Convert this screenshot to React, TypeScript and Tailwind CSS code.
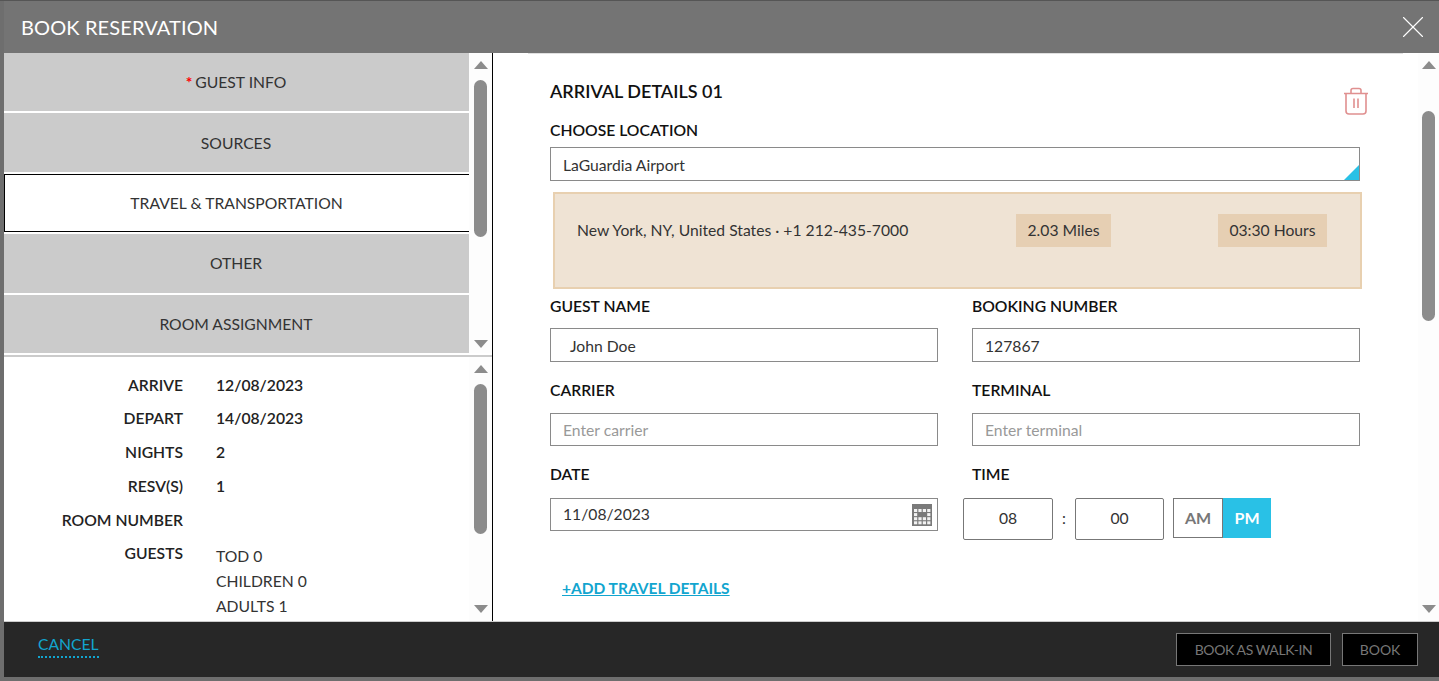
import { X } from 'lucide-react';

const navItems = ['GUEST INFO', 'SOURCES', 'TRAVEL & TRANSPORTATION', 'OTHER', 'ROOM ASSIGNMENT'];

// 커스텀 스크롤바 (thumb 위치는 margin으로 지정)
function ScrollBar({ thumbClass, className }: { thumbClass: string; className: string }) {
  return (
    <div className={`flex flex-col items-center bg-[#fdfdfd] ${className}`}>
      <svg width="14" height="8" viewBox="0 0 14 8" className="shrink-0"><path d="M7 0L14 8H0Z" fill="#8c8c8c" /></svg>
      <div className={`w-[13px] rounded-full bg-[#8c8c8c] ${thumbClass}`} />
      <svg width="14" height="8" viewBox="0 0 14 8" className="mt-auto shrink-0"><path d="M0 0H14L7 8Z" fill="#8c8c8c" /></svg>
    </div>
  );
}

function Summary({ label, value }: { label: string; value?: string }) {
  return (
    <div className="flex h-[33.8px] items-center text-[15.7px]">
      <div className="w-[179px] text-right font-semibold text-[#222]">{label}</div>
      <div className="ml-[33px] font-semibold text-[#222]">{value}</div>
    </div>
  );
}

function Field({ label, value, placeholder, boxClass }: { label: string; value?: string; placeholder?: string; boxClass: string }) {
  return (
    <div className="w-[388px]">
      <div className="h-[22px] text-[15.7px] font-semibold leading-[22px] text-[#111]">{label}</div>
      <div className={`flex items-center border border-[#8a8a8a] bg-white text-[15.7px] ${value ? 'text-[#333]' : 'text-[#999]'} ${boxClass}`}>
        {value ?? placeholder}
      </div>
    </div>
  );
}

export default function App() {
  return (
    <div className="flex h-[681px] w-[1439px] flex-col overflow-hidden border-t border-[#555] bg-[#6e6e6e] pb-[4px] pl-[4px] font-['Lato',sans-serif] text-[#333]">
      <header className="flex h-[52px] shrink-0 items-center justify-between bg-[#747474] pl-[17px] pr-[7px] text-white">
        <h1 className="text-[20px] tracking-[0.12px]">BOOK RESERVATION</h1>
        <X size={38} strokeWidth={0.7} />
      </header>

      <div className="flex h-[568px] shrink-0 bg-white">
        <div className="flex w-[489px] shrink-0 flex-col border-r border-black">
          <div className="flex h-[302px] shrink-0">
            <nav className="flex w-[465px] flex-col gap-[2px] pr-px text-[15.7px]">
              {navItems.map((item, i) => (
                <div
                  key={item}
                  className={`-mr-px flex h-[58.4px] items-center justify-center pr-px pt-[1.5px] ${i === 2 ? 'border border-r-0 border-black bg-white' : 'bg-[#cbcbcb]'}`}
                >
                  {i === 0 && <span className="mr-[3px] font-bold text-[#f00]">*</span>}
                  {item}
                </div>
              ))}
            </nav>
            <ScrollBar className="h-[300px] w-[23px] pt-[8px] pb-[5px]" thumbClass="mt-[11px] h-[157px]" />
          </div>

          <div className="flex min-h-0 flex-1 border-t-2 border-[#cbcbcb]">
            <div className="w-[465px] pt-[11.4px]">
              <Summary label="ARRIVE" value="12/08/2023" />
              <Summary label="DEPART" value="14/08/2023" />
              <Summary label="NIGHTS" value="2" />
              <Summary label="RESV(S)" value="1" />
              <Summary label="ROOM NUMBER" />
              <div className="flex text-[15.7px]">
                <div className="w-[179px] pt-[4.6px] text-right font-semibold text-[#222]">GUESTS</div>
                <div className="ml-[33px] pt-[6.6px] leading-[25px]">
                  <div>TOD 0</div>
                  <div>CHILDREN 0</div>
                  <div>ADULTS 1</div>
                </div>
              </div>
            </div>
            <ScrollBar className="w-[23px] pt-[8px] pb-[8px]" thumbClass="mt-[11px] h-[150px]" />
          </div>
        </div>

        <main className="relative flex min-w-0 flex-1">
          <div className="min-w-0 flex-1 pl-[57px] pr-[58px] pt-[27px]">
            <div className="flex h-[24px] items-center pb-[2px] text-[18px] font-semibold text-[#111]">ARRIVAL DETAILS 01</div>
            <div className="mt-[15px] h-[22px] text-[15.7px] font-semibold leading-[22px] text-[#111]">CHOOSE LOCATION</div>
            <div className="relative mt-[6px] flex h-[34px] items-center border border-[#8a8a8a] pl-3 pt-[3px] text-[15.7px]">
              LaGuardia Airport
              <div className="absolute bottom-0 right-0 h-0 w-0 border-b-[15px] border-l-[15px] border-b-[#29c1e6] border-l-transparent" />
            </div>
            <div className="ml-[3px] mr-[-2px] mt-[11px] flex h-[97px] items-start border-2 border-[#e8d0b0] bg-[#efe3d4] pl-[22px] pt-[20px] text-[15.7px]">
              <div className="flex h-[33px] w-[439px] items-center">New York, NY, United States · +1 212-435-7000</div>
              <div className="flex h-[33px] w-[95px] items-center justify-center bg-[#e6cfb3]">2.03 Miles</div>
              <div className="ml-[107px] flex h-[33px] w-[109px] items-center justify-center bg-[#e6cfb3]">03:30 Hours</div>
            </div>

            <div className="mt-[6px] flex gap-[34px]">
              <Field label="GUEST NAME" value="John Doe" boxClass="mt-[11px] h-[34px] pl-[19px] pt-[3px]" />
              <Field label="BOOKING NUMBER" value="127867" boxClass="mt-[11px] h-[34px] pl-3 pt-[3px]" />
            </div>
            <div className="mt-[17px] flex gap-[34px]">
              <Field label="CARRIER" placeholder="Enter carrier" boxClass="mt-[12px] h-[33px] pl-3 pt-[2px]" />
              <Field label="TERMINAL" placeholder="Enter terminal" boxClass="mt-[12px] h-[33px] pl-3 pt-[2px]" />
            </div>

            <div className="mt-[17px] flex">
              <div className="w-[388px]">
                <div className="h-[22px] text-[15.7px] font-semibold leading-[22px] text-[#111]">DATE</div>
                <div className="mt-[13px] flex h-[33px] items-center justify-between border border-[#8a8a8a] pl-3 pr-[5px] text-[15.7px]">
                  11/08/2023
                  <svg width="20" height="22" viewBox="0 0 20 22">
                    <rect width="20" height="22" fill="#7a7a7a" />
                    {[0, 1, 2, 3].map((c) =>
                      [0, 1, 2, 3].map((r) => (
                        <rect key={`${c}-${r}`} x={2 + c * 4.4} y={5 + r * 4.1} width="3.2" height="3" fill={(c === 1 || c === 2) && r === 1 ? '#7a7a7a' : '#f2f2f2'} />
                      )),
                    )}
                  </svg>
                </div>
              </div>
              <div className="ml-[25px]">
                <div className="h-[22px] pl-[9px] text-[15.7px] font-semibold leading-[22px] text-[#111]">TIME</div>
                <div className="mt-[13px] flex items-start text-[15.7px]">
                  <div className="flex h-[42px] w-[90px] items-center justify-center rounded-[2px] border border-[#777]">08</div>
                  <div className="flex h-[42px] w-[22px] items-center justify-center">:</div>
                  <div className="flex h-[42px] w-[89px] items-center justify-center rounded-[2px] border border-[#777]">00</div>
                  <div className="ml-[9px] flex h-[40px] w-[50px] items-center justify-center border border-[#777] text-[16px] font-bold text-[#777]">AM</div>
                  <div className="flex h-[40px] w-[48px] items-center justify-center bg-[#29c1e6] text-[16px] font-bold text-white">PM</div>
                </div>
              </div>
            </div>

            <a className="ml-[12px] mt-[37px] block text-[15.5px] font-bold leading-[22px] text-[#12a5cf] underline">+ADD TRAVEL DETAILS</a>
          </div>
          <ScrollBar className="w-[21px] pt-[8px] pb-[8px]" thumbClass="mt-[42px] h-[210px]" />
          <div className="absolute left-[35px] right-[36px] top-0 h-px bg-[#e0e0e0]" />
          <svg className="absolute left-[850px] top-[34px]" width="26" height="28" viewBox="0 0 26 28" fill="none" stroke="#e09090" strokeWidth="1.6">
            <path d="M1 6.5H25M8 6V3.5C8 2 9 1.5 10 1.5H16C17 1.5 18 2 18 3.5V6M3 6.5V24C3 26 4 27 6 27H20C22 27 23 26 23 24V6.5M11 11.5V21M15 11.5V21" />
          </svg>
        </main>
      </div>

      <footer className="flex min-h-0 flex-1 items-start justify-between border-t border-[#ccc] bg-[#272727] pl-[34px] pr-[21px]">
        <a className="mt-[12px] border-b-2 border-dotted border-[#12a5cf] pb-[2px] text-[15.7px] leading-[20px] text-[#12a5cf]">CANCEL</a>
        <div className="mt-[11px] flex gap-[11px] text-[14px] text-[#777]">
          <div className="flex h-[33px] w-[155px] items-center justify-center border border-[#777] bg-black tracking-[-0.4px]">BOOK AS WALK-IN</div>
          <div className="flex h-[33px] w-[76px] items-center justify-center border border-[#777] bg-black">BOOK</div>
        </div>
      </footer>
    </div>
  );
}
